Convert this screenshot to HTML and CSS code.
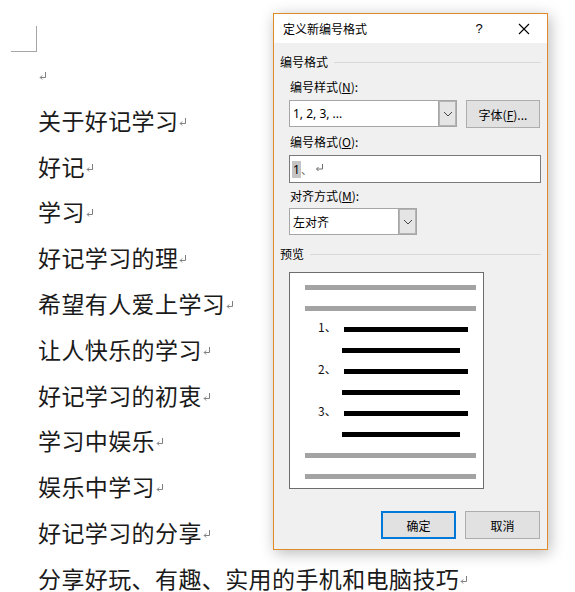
FILE: index.html
```html
<!DOCTYPE html>
<html lang="zh-CN">
<head>
<meta charset="utf-8">
<title>定义新编号格式</title>
<link rel="stylesheet" href="styles.css">
</head>
<body>
<div class="doc">
  <div class="corner"></div>
  <p class="para"><svg class="pm" width="8" height="8" viewBox="0 0 8 8"><path d="M6.5 0 V5.5 H1.2 M3.2 3.5 L1.2 5.5 L3.2 7.5" stroke="#7f7f7f" stroke-width="1" fill="none"/></svg></p>
  <p class="para">关于好记学习<svg class="pm" width="8" height="8" viewBox="0 0 8 8"><path d="M6.5 0 V5.5 H1.2 M3.2 3.5 L1.2 5.5 L3.2 7.5" stroke="#7f7f7f" stroke-width="1" fill="none"/></svg></p>
  <p class="para">好记<svg class="pm" width="8" height="8" viewBox="0 0 8 8"><path d="M6.5 0 V5.5 H1.2 M3.2 3.5 L1.2 5.5 L3.2 7.5" stroke="#7f7f7f" stroke-width="1" fill="none"/></svg></p>
  <p class="para">学习<svg class="pm" width="8" height="8" viewBox="0 0 8 8"><path d="M6.5 0 V5.5 H1.2 M3.2 3.5 L1.2 5.5 L3.2 7.5" stroke="#7f7f7f" stroke-width="1" fill="none"/></svg></p>
  <p class="para">好记学习的理<svg class="pm" width="8" height="8" viewBox="0 0 8 8"><path d="M6.5 0 V5.5 H1.2 M3.2 3.5 L1.2 5.5 L3.2 7.5" stroke="#7f7f7f" stroke-width="1" fill="none"/></svg></p>
  <p class="para">希望有人爱上学习<svg class="pm" width="8" height="8" viewBox="0 0 8 8"><path d="M6.5 0 V5.5 H1.2 M3.2 3.5 L1.2 5.5 L3.2 7.5" stroke="#7f7f7f" stroke-width="1" fill="none"/></svg></p>
  <p class="para">让人快乐的学习<svg class="pm" width="8" height="8" viewBox="0 0 8 8"><path d="M6.5 0 V5.5 H1.2 M3.2 3.5 L1.2 5.5 L3.2 7.5" stroke="#7f7f7f" stroke-width="1" fill="none"/></svg></p>
  <p class="para">好记学习的初衷<svg class="pm" width="8" height="8" viewBox="0 0 8 8"><path d="M6.5 0 V5.5 H1.2 M3.2 3.5 L1.2 5.5 L3.2 7.5" stroke="#7f7f7f" stroke-width="1" fill="none"/></svg></p>
  <p class="para">学习中娱乐<svg class="pm" width="8" height="8" viewBox="0 0 8 8"><path d="M6.5 0 V5.5 H1.2 M3.2 3.5 L1.2 5.5 L3.2 7.5" stroke="#7f7f7f" stroke-width="1" fill="none"/></svg></p>
  <p class="para">娱乐中学习<svg class="pm" width="8" height="8" viewBox="0 0 8 8"><path d="M6.5 0 V5.5 H1.2 M3.2 3.5 L1.2 5.5 L3.2 7.5" stroke="#7f7f7f" stroke-width="1" fill="none"/></svg></p>
  <p class="para">好记学习的分享<svg class="pm" width="8" height="8" viewBox="0 0 8 8"><path d="M6.5 0 V5.5 H1.2 M3.2 3.5 L1.2 5.5 L3.2 7.5" stroke="#7f7f7f" stroke-width="1" fill="none"/></svg></p>
  <p class="para para-last">分享好玩、有趣、实用的手机和电脑技巧<svg class="pm" width="8" height="8" viewBox="0 0 8 8"><path d="M6.5 0 V5.5 H1.2 M3.2 3.5 L1.2 5.5 L3.2 7.5" stroke="#7f7f7f" stroke-width="1" fill="none"/></svg></p>
</div>

<div class="dialog">
  <div class="titlebar">
    <span class="title">定义新编号格式</span>
    <span class="help">?</span>
    <span class="close">
      <svg width="12" height="12" viewBox="0 0 12 12"><path d="M1 1 L11 11 M11 1 L1 11" stroke="#000" stroke-width="1.1" fill="none"/></svg>
    </span>
  </div>
  <div class="body">
    <div class="group"><span>编号格式</span><span class="rule"></span></div>
    <div class="indent">
      <div class="label lbl-first">编号样式(<u>N</u>):</div>
      <div class="row">
        <div class="combo combo-wide"><span class="value latin">1, 2, 3, ...</span><span class="drop"><svg width="10" height="6" viewBox="0 0 10 6"><path d="M1 1 L5 5 L9 1" stroke="#444" stroke-width="1" fill="none"/></svg></span></div>
        <div class="btn btn-font">字体(<u>F</u>)...</div>
      </div>
      <div class="label">编号格式(<u>O</u>):</div>
      <div class="textbox"><span class="sel latin">1</span><span class="dun">、</span><svg class="pm-small" width="9" height="8" viewBox="0 0 9 8"><path d="M7.5 0 V5 H1.5 M3.5 3 L1.5 5 L3.5 7" stroke="#6f6f6f" stroke-width="1" fill="none"/></svg></div>
      <div class="label lbl-align">对齐方式(<u>M</u>):</div>
      <div class="combo combo-narrow"><span class="value">左对齐</span><span class="drop"><svg width="10" height="6" viewBox="0 0 10 6"><path d="M1 1 L5 5 L9 1" stroke="#444" stroke-width="1" fill="none"/></svg></span></div>
    </div>
    <div class="group group-preview"><span>预览</span><span class="rule"></span></div>
    <div class="indent">
      <div class="preview">
        <div class="bar bar-grey"></div>
        <div class="bar bar-grey"></div>
        <div class="nrow"><span class="num">1、</span><div class="bar bar-first"></div></div>
        <div class="bar bar-cont"></div>
        <div class="nrow"><span class="num">2、</span><div class="bar bar-first"></div></div>
        <div class="bar bar-cont"></div>
        <div class="nrow"><span class="num">3、</span><div class="bar bar-first"></div></div>
        <div class="bar bar-cont"></div>
        <div class="bar bar-grey"></div>
        <div class="bar bar-grey"></div>
      </div>
    </div>
    <div class="buttons">
      <div class="btn btn-ok">确定</div>
      <div class="btn btn-cancel">取消</div>
    </div>
  </div>
</div>
</body>
</html>
```
FILE: styles.css
```css
html, body {
  margin: 0;
  padding: 0;
  background: #ffffff;
}
body {
  width: 575px;
  height: 592px;
  overflow: hidden;
  position: relative;
  font-family: "Noto Sans CJK SC", "Noto Sans", sans-serif;
}

/* ---------- document ---------- */
.doc {
  padding-top: 26px;
}
.corner {
  box-sizing: border-box;
  width: 26px;
  height: 26px;
  margin-left: 11px;
  border-right: 1px solid #a6a6a6;
  border-bottom: 1px solid #a6a6a6;
}
.para {
  margin: 0;
  padding-left: 38px;
  font-size: 23px;
  letter-spacing: 0.4px;
  line-height: 45.8px;
  height: 45.8px;
  color: #1a1a1a;
  white-space: nowrap;
}
.para-last {
  line-height: 23px;
  height: 23px;
  padding-top: 11.4px;
}
.pm {
  vertical-align: 4px;
  margin-left: 1px;
}

/* ---------- dialog ---------- */
.dialog {
  position: absolute;
  left: 273px;
  top: 13px;
  width: 275px;
  height: 537px;
  box-sizing: border-box;
  border: 1px solid #e08a2c;
  background: #f0f0f0;
  box-shadow: 2px 3px 14px rgba(0, 0, 0, 0.28);
  display: flex;
  flex-direction: column;
  font-size: 12px;
  color: #000;
}
.latin {
  font-family: "Noto Sans", "Noto Sans CJK SC", sans-serif;
}
.titlebar {
  height: 29px;
  background: #ffffff;
  display: flex;
  align-items: center;
  padding-left: 9px;
  flex-shrink: 0;
}
.title {
  flex: 1;
  font-size: 12px;
}
.help {
  width: 12px;
  font-family: "Liberation Sans", sans-serif;
  font-size: 13px;
  margin-right: 33px;
  text-align: center;
}
.close {
  display: flex;
  width: 12px;
  margin-right: 17px;
}

.body {
  flex: 1;
  display: flex;
  flex-direction: column;
  padding: 11px 6px 10px 6px;
}
.group {
  display: flex;
  align-items: center;
  height: 16px;
  line-height: 16px;
  gap: 6px;
}
.group .rule {
  flex: 1;
  height: 1px;
  background: #d9d9d9;
}
.group-preview {
  margin-top: 11px;
}
.indent {
  padding-left: 9px;
  display: flex;
  flex-direction: column;
}
.label {
  height: 16px;
  line-height: 16px;
  margin-top: 6px;
  padding-left: 1px;
}
.lbl-first {
  margin-top: 9px;
}
.lbl-align {
  margin-top: 5px;
}
.row {
  display: flex;
  gap: 9px;
  margin-top: 5px;
}
.combo {
  height: 27px;
  box-sizing: border-box;
  border: 1px solid #a6a6a6;
  background: #fff;
  display: flex;
  align-items: stretch;
}
.combo-wide {
  width: 168px;
}
.combo-narrow {
  width: 128px;
  margin-top: 4px;
}
.combo .value {
  flex: 1;
  padding-left: 3px;
  line-height: 25px;
}
.drop {
  width: 17px;
  background: #e5e5e5;
  border-left: 1px solid #a6a6a6;
  box-shadow: inset 0 0 0 1px #b4b4b4;
  display: flex;
  align-items: center;
  justify-content: center;
}
.btn {
  box-sizing: border-box;
  height: 28px;
  width: 75px;
  background: #e1e1e1;
  border: 1px solid #adadad;
  display: flex;
  align-items: center;
  justify-content: center;
}
.btn-font {
  width: 74px;
}
.textbox {
  margin-top: 5px;
  height: 28px;
  width: 252px;
  box-sizing: border-box;
  border: 1px solid #7a7a7a;
  background: #fff;
  display: flex;
  align-items: center;
  padding-left: 2px;
}
.sel {
  background: #c4c4c4;
  line-height: 17px;
  padding: 0 1px;
}
.dun {
  font-size: 11px;
  color: #555;
}
.pm-small {
  margin-left: 3px;
  margin-top: -2px;
}

.preview {
  margin-top: 10px;
  width: 195px;
  height: 217px;
  box-sizing: border-box;
  border: 1px solid #6d6d6d;
  background: #fff;
  padding-top: 12px;
  display: flex;
  flex-direction: column;
  gap: 16px;
}
.bar {
  height: 5px;
  flex-shrink: 0;
}
.bar-grey {
  background: #a3a3a3;
  margin-left: 15px;
  width: 171px;
}
.bar-cont {
  background: #000;
  margin-left: 52px;
  width: 118px;
}
.nrow {
  height: 5px;
  display: flex;
  align-items: flex-end;
  padding-left: 28px;
  flex-shrink: 0;
}
.num {
  width: 26px;
  font-size: 12px;
  line-height: 12px;
  margin-bottom: -1px;
  color: #111;
}
.bar-first {
  background: #000;
  width: 124px;
}

.buttons {
  margin-top: auto;
  display: flex;
  justify-content: flex-end;
  gap: 9px;
  padding-right: 1px;
}
.btn-ok {
  border: 2px solid #0078d7;
}
```
